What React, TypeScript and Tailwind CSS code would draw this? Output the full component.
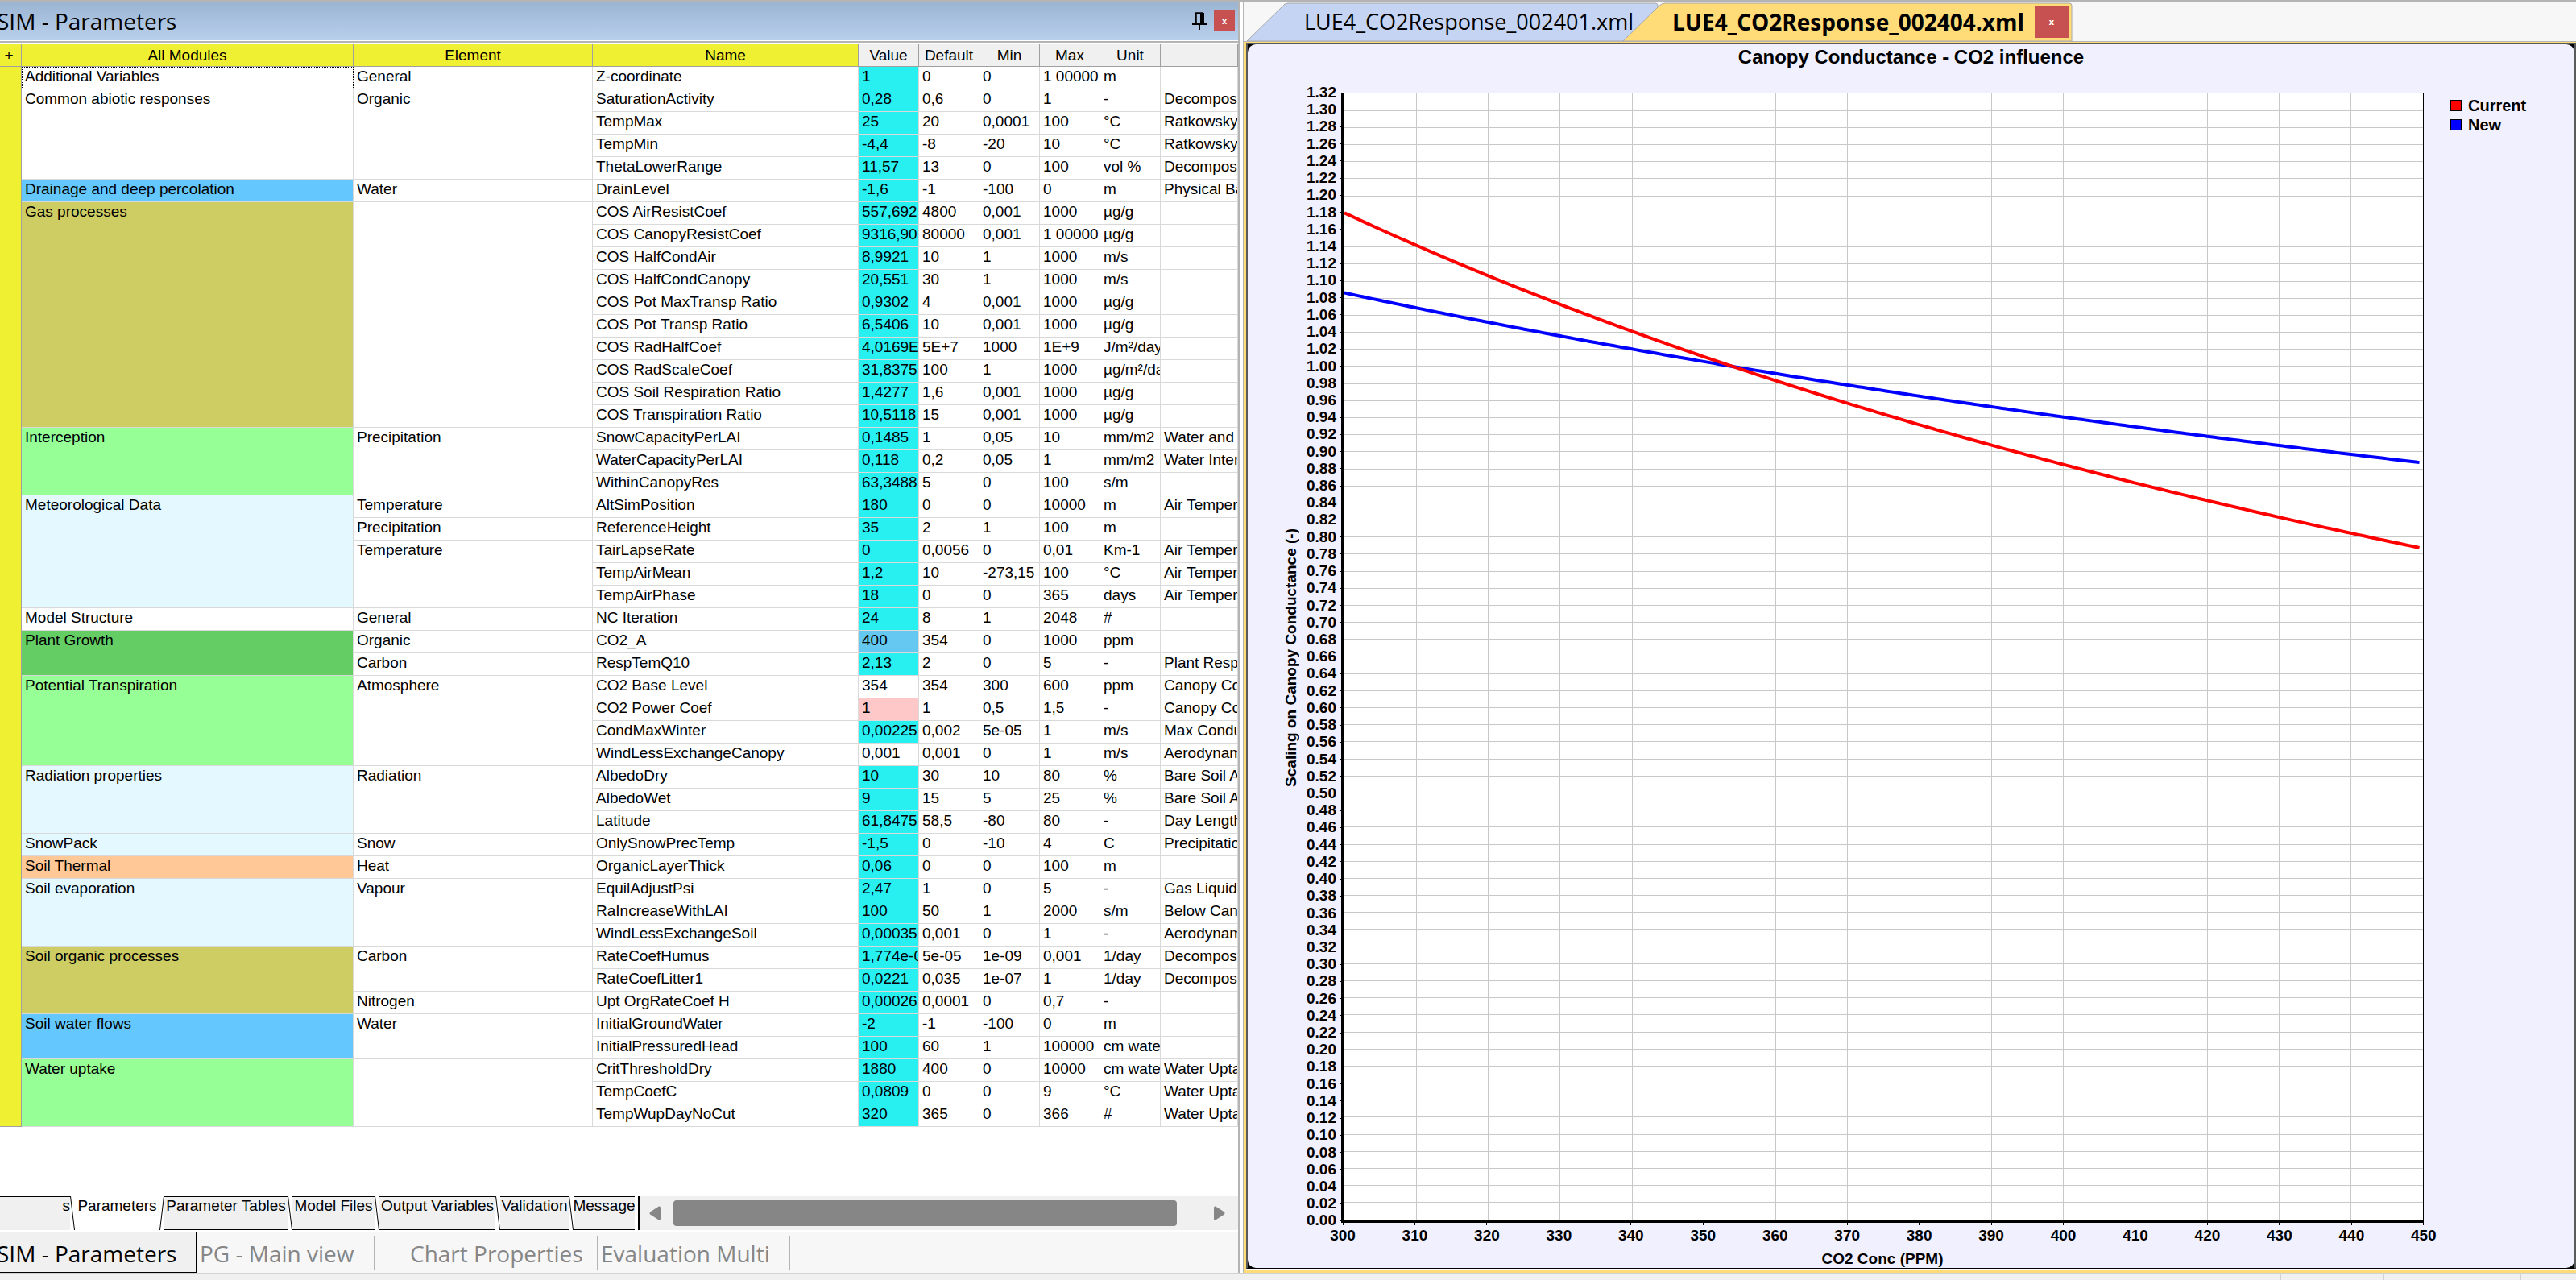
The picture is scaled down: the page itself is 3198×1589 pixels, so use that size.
import { Fragment } from "react";
import clsx from "clsx";

type Param = [name: string, value: string, def: string, min: string, max: string, unit: string, group: string];

interface ModuleGroup {
  name: string;
  color: string;
  elements: { name: string; params: Param[] }[];
}

const modules: ModuleGroup[] = [
  { name: "Additional Variables", color: "bg-white", elements: [{ name: "General", params: [["Z-coordinate", "1", "0", "0", "1 00000", "m", ""]] }] },
  {
    name: "Common abiotic responses",
    color: "bg-white",
    elements: [
      {
        name: "Organic",
        params: [
          ["SaturationActivity", "0,28", "0,6", "0", "1", "-", "Decompos"],
          ["TempMax", "25", "20", "0,0001", "100", "°C", "Ratkowsky"],
          ["TempMin", "-4,4", "-8", "-20", "10", "°C", "Ratkowsky"],
          ["ThetaLowerRange", "11,57", "13", "0", "100", "vol %", "Decompos"],
        ],
      },
    ],
  },
  { name: "Drainage and deep percolation", color: "bg-[#64c8ff]", elements: [{ name: "Water", params: [["DrainLevel", "-1,6", "-1", "-100", "0", "m", "Physical Ba"]] }] },
  {
    name: "Gas processes",
    color: "bg-[#cdcd64]",
    elements: [
      {
        name: "",
        params: [
          ["COS AirResistCoef", "557,692", "4800", "0,001", "1000", "µg/g", ""],
          ["COS CanopyResistCoef", "9316,90", "80000", "0,001", "1 00000", "µg/g", ""],
          ["COS HalfCondAir", "8,9921", "10", "1", "1000", "m/s", ""],
          ["COS HalfCondCanopy", "20,551", "30", "1", "1000", "m/s", ""],
          ["COS Pot MaxTransp Ratio", "0,9302", "4", "0,001", "1000", "µg/g", ""],
          ["COS Pot Transp Ratio", "6,5406", "10", "0,001", "1000", "µg/g", ""],
          ["COS RadHalfCoef", "4,0169E", "5E+7", "1000", "1E+9", "J/m²/day", ""],
          ["COS RadScaleCoef", "31,8375", "100", "1", "1000", "µg/m²/da", ""],
          ["COS Soil Respiration Ratio", "1,4277", "1,6", "0,001", "1000", "µg/g", ""],
          ["COS Transpiration Ratio", "10,5118", "15", "0,001", "1000", "µg/g", ""],
        ],
      },
    ],
  },
  {
    name: "Interception",
    color: "bg-[#96ff96]",
    elements: [
      {
        name: "Precipitation",
        params: [
          ["SnowCapacityPerLAI", "0,1485", "1", "0,05", "10", "mm/m2", "Water and"],
          ["WaterCapacityPerLAI", "0,118", "0,2", "0,05", "1", "mm/m2", "Water Inter"],
          ["WithinCanopyRes", "63,3488", "5", "0", "100", "s/m", ""],
        ],
      },
    ],
  },
  {
    name: "Meteorological Data",
    color: "bg-[#e4f8ff]",
    elements: [
      { name: "Temperature", params: [["AltSimPosition", "180", "0", "0", "10000", "m", "Air Temper"]] },
      { name: "Precipitation", params: [["ReferenceHeight", "35", "2", "1", "100", "m", ""]] },
      {
        name: "Temperature",
        params: [
          ["TairLapseRate", "0", "0,0056", "0", "0,01", "Km-1", "Air Temper"],
          ["TempAirMean", "1,2", "10", "-273,15", "100", "°C", "Air Temper"],
          ["TempAirPhase", "18", "0", "0", "365", "days", "Air Temper"],
        ],
      },
    ],
  },
  { name: "Model Structure", color: "bg-white", elements: [{ name: "General", params: [["NC Iteration", "24", "8", "1", "2048", "#", ""]] }] },
  {
    name: "Plant Growth",
    color: "bg-[#64cd64]",
    elements: [
      { name: "Organic", params: [["CO2_A", "400", "354", "0", "1000", "ppm", ""]] },
      { name: "Carbon", params: [["RespTemQ10", "2,13", "2", "0", "5", "-", "Plant Resp"]] },
    ],
  },
  {
    name: "Potential Transpiration",
    color: "bg-[#96ff96]",
    elements: [
      {
        name: "Atmosphere",
        params: [
          ["CO2 Base Level", "354", "354", "300", "600", "ppm", "Canopy Co"],
          ["CO2 Power Coef", "1", "1", "0,5", "1,5", "-", "Canopy Co"],
          ["CondMaxWinter", "0,00225", "0,002", "5e-05", "1", "m/s", "Max Condu"],
          ["WindLessExchangeCanopy", "0,001", "0,001", "0", "1", "m/s", "Aerodynam"],
        ],
      },
    ],
  },
  {
    name: "Radiation properties",
    color: "bg-[#e4f8ff]",
    elements: [
      {
        name: "Radiation",
        params: [
          ["AlbedoDry", "10", "30", "10", "80", "%", "Bare Soil A"],
          ["AlbedoWet", "9", "15", "5", "25", "%", "Bare Soil A"],
          ["Latitude", "61,8475", "58,5", "-80", "80", "-", "Day Length"],
        ],
      },
    ],
  },
  { name: "SnowPack", color: "bg-[#e4f8ff]", elements: [{ name: "Snow", params: [["OnlySnowPrecTemp", "-1,5", "0", "-10", "4", "C", "Precipitatio"]] }] },
  { name: "Soil Thermal", color: "bg-[#ffc896]", elements: [{ name: "Heat", params: [["OrganicLayerThick", "0,06", "0", "0", "100", "m", ""]] }] },
  {
    name: "Soil evaporation",
    color: "bg-[#e4f8ff]",
    elements: [
      {
        name: "Vapour",
        params: [
          ["EquilAdjustPsi", "2,47", "1", "0", "5", "-", "Gas Liquid"],
          ["RaIncreaseWithLAI", "100", "50", "1", "2000", "s/m", "Below Can"],
          ["WindLessExchangeSoil", "0,00035", "0,001", "0", "1", "-", "Aerodynam"],
        ],
      },
    ],
  },
  {
    name: "Soil organic processes",
    color: "bg-[#cdcd64]",
    elements: [
      {
        name: "Carbon",
        params: [
          ["RateCoefHumus", "1,774e-0", "5e-05", "1e-09", "0,001", "1/day", "Decompos"],
          ["RateCoefLitter1", "0,0221", "0,035", "1e-07", "1", "1/day", "Decompos"],
        ],
      },
      { name: "Nitrogen", params: [["Upt OrgRateCoef H", "0,00026", "0,0001", "0", "0,7", "-", ""]] },
    ],
  },
  {
    name: "Soil water flows",
    color: "bg-[#64c8ff]",
    elements: [
      {
        name: "Water",
        params: [
          ["InitialGroundWater", "-2", "-1", "-100", "0", "m", ""],
          ["InitialPressuredHead", "100", "60", "1", "100000", "cm wate", ""],
        ],
      },
    ],
  },
  {
    name: "Water uptake",
    color: "bg-[#96ff96]",
    elements: [
      {
        name: "",
        params: [
          ["CritThresholdDry", "1880", "400", "0", "10000", "cm wate", "Water Upta"],
          ["TempCoefC", "0,0809", "0", "0", "9", "°C", "Water Upta"],
          ["TempWupDayNoCut", "320", "365", "0", "366", "#", "Water Upta"],
        ],
      },
    ],
  },
];

// Parameters whose value cell is not the usual "changed" cyan
const valueColors: Record<string, string> = {
  CO2_A: "bg-[#64c8f0]",
  "CO2 Base Level": "bg-white",
  "CO2 Power Coef": "bg-[#ffc8c8]",
  WindLessExchangeCanopy: "bg-white",
};

const cell = "h-7 overflow-hidden whitespace-nowrap border-b border-r border-[#d9d9d9] p-0 pb-[3px] pl-1 align-top font-normal";
const headCell = "h-7 overflow-hidden whitespace-nowrap border-b border-r border-[#a0a0a0] p-0 font-normal";

function ParameterTable() {
  const total = modules.flatMap((m) => m.elements.flatMap((e) => e.params)).length;

  return (
    <table className="w-full table-fixed border-separate border-spacing-0 text-left text-[19px] leading-6">
      <colgroup>
        <col className="w-[27px]" />
        <col className="w-[412px]" />
        <col className="w-[297px]" />
        <col className="w-[330px]" />
        <col className="w-[75px]" />
        <col className="w-[75px]" />
        <col className="w-[75px]" />
        <col className="w-[75px]" />
        <col className="w-[75px]" />
        <col />
      </colgroup>
      <thead className="text-center">
        <tr>
          <th className={clsx(headCell, "bg-[#f0f032] pr-1")}>+</th>
          {["All Modules", "Element", "Name"].map((label) => (
            <th key={label} className={clsx(headCell, "bg-[#f0f032]")}>
              {label}
            </th>
          ))}
          {["Value", "Default", "Min", "Max", "Unit", ""].map((label) => (
            <th key={label} className={clsx(headCell, "bg-[#f0f0f0]")}>
              {label}
            </th>
          ))}
        </tr>
      </thead>
      <tbody>
        {modules.map((mod, m) => {
          const rows = mod.elements.reduce((sum, e) => sum + e.params.length, 0);
          return (
            <Fragment key={mod.name}>
              {mod.elements.map((element, e) =>
                element.params.map(([name, value, def, min, max, unit, group], p) => (
                  <tr key={name}>
                    {m === 0 && <td rowSpan={total} className="border-b border-r border-[#a0a0a0] bg-[#f0f032] p-0" />}
                    {e === 0 && p === 0 && (
                      <th rowSpan={rows} className={clsx(cell, mod.color, m === 0 && "outline-1 -outline-offset-1 outline-dotted outline-black")}>
                        {mod.name}
                      </th>
                    )}
                    {p === 0 && (
                      <td rowSpan={element.params.length} className={cell}>
                        {element.name}
                      </td>
                    )}
                    <td className={cell}>{name}</td>
                    <td className={clsx(cell, valueColors[name] ?? "bg-[#28f0f0]")}>{value}</td>
                    <td className={cell}>{def}</td>
                    <td className={cell}>{min}</td>
                    <td className={cell}>{max}</td>
                    <td className={cell}>{unit}</td>
                    <td className={cell}>{group}</td>
                  </tr>
                ))
              )}
            </Fragment>
          );
        })}
      </tbody>
    </table>
  );
}

const sheets = [
  { label: "Parameters", width: "w-[105px]" },
  { label: "Parameter Tables", width: "w-[153px]" },
  { label: "Model Files", width: "w-[102px]" },
  { label: "Output Variables", width: "w-[144px]" },
  { label: "Validation", width: "w-[85px]" },
  { label: "Message", width: "w-[76px]" },
];

function SheetTabs() {
  return (
    <div className="flex h-11 text-[19px] leading-[22px]">
      <div className="flex h-[42px] w-[788px] overflow-hidden">
        <button className="flex w-[87px] shrink-0 items-start justify-end border-t border-black bg-[#f0f0f0]">s</button>
        {sheets.map(({ label, width }, i) => (
          <Fragment key={label}>
            <svg className="h-full w-[6px] shrink-0" viewBox="0 0 6 42" preserveAspectRatio="none" fill="none" stroke="#000">
              <path d={i === 1 ? "M5.500 0 L0.500 42" : "M0.500 0 L5.500 42"} />
            </svg>
            <button
              className={clsx(
                "flex shrink-0 items-start justify-center whitespace-nowrap border-black",
                width,
                i === 0 ? "bg-white pt-px" : "border-y bg-[#f0f0f0]"
              )}
            >
              {label}
            </button>
          </Fragment>
        ))}
      </div>
      <div className="ml-1 flex h-[42px] grow items-center border-l-2 border-black bg-[#f0f0f0] pl-3 pr-4">
        <button aria-label="Scroll left">
          <svg className="h-[18px] w-[14px]" viewBox="0 0 14 18" fill="#868686">
            <path d="M12 0.5 Q14 0 14 2 V16 Q14 18 12 17.5 L1 10.500 Q0 9 1 7.500 Z" />
          </svg>
        </button>
        <div className="ml-4 mr-[46px] h-8 grow rounded-sm bg-[#868686]" />
        <button aria-label="Scroll right">
          <svg className="h-[18px] w-[14px]" viewBox="0 0 14 18" fill="#868686">
            <path d="M2 0.5 Q0 0 0 2 V16 Q0 18 2 17.500 L13 10.500 Q14 9 13 7.500 Z" />
          </svg>
        </button>
      </div>
    </div>
  );
}

function ParametersPane() {
  return (
    <section className="flex w-[1539px] shrink-0 flex-col overflow-hidden border-r-2 border-[#b4b4b4] bg-white">
      <header className="flex h-12 items-center bg-linear-to-b from-[#9ab4d2] to-[#b9d0ec] pr-1">
        <h1 className="-ml-1 font-['Open_Sans',sans-serif] text-[28px] leading-8">SIM - Parameters</h1>
        <button aria-label="Pin" className="ml-auto mr-2">
          <svg className="h-[22px] w-5" viewBox="0 0 20 22" fill="none" stroke="#000">
            <path d="M5.500 14 V1.500 H14" strokeWidth="2.500" />
            <path d="M13.500 1 V14" strokeWidth="5" />
            <path d="M1 14.500 H19" strokeWidth="3" />
            <path d="M10 15 V22" strokeWidth="2" />
          </svg>
        </button>
        <button aria-label="Close" className="flex h-[26px] w-[26px] items-center justify-center bg-[#c75050] text-[11px] font-bold leading-3 text-white">
          x
        </button>
      </header>
      <div className="mt-px flex grow flex-col border-t-2 border-[#b4b4b4] pt-0.5">
        <ParameterTable />
        <div className="mt-auto">
          <SheetTabs />
        </div>
      </div>
      <nav className="flex h-[51px] border-t border-black bg-[#f7f7f7] font-['Open_Sans',sans-serif] text-[28px] leading-[52px] text-[#868686]">
        <button className="w-[244px] shrink-0 border-b border-r border-black bg-[#f0f0f0] text-left text-black">
          <span className="-ml-1">SIM - Parameters</span>
        </button>
        <button className="my-1 w-[221px] shrink-0 border-r border-[#b4b4b4] pl-1 text-left leading-[44px]">PG - Main view</button>
        <button className="my-1 w-[277px] shrink-0 border-r border-[#b4b4b4] pl-11 text-left leading-[44px]">Chart Properties</button>
        <button className="my-1 w-[239px] shrink-0 border-r border-[#b4b4b4] pl-1 text-left leading-[44px]">Evaluation Multi</button>
      </nav>
    </section>
  );
}

const X_MIN = 300;
const X_MAX = 450;
const Y_MAX = 1.32;
const BASE_LEVEL = 354;

const xTicks = Array.from({ length: 16 }, (_, i) => X_MIN + i * 10);
const yTicks = Array.from({ length: 67 }, (_, i) => (132 - i * 2) / 100);

const series = [
  { label: "Current", stroke: "#ff0000", swatch: "bg-[#ff0000]", power: 1 },
  { label: "New", stroke: "#0000ff", swatch: "bg-[#0000ff]", power: 0.5 },
];

function curve(power: number) {
  const points: string[] = [];
  for (let co2 = X_MIN; co2 < X_MAX; co2 += 0.5) {
    const scale = Math.pow(BASE_LEVEL / co2, power);
    points.push(`${(((co2 - X_MIN) / (X_MAX - X_MIN)) * 1000).toFixed(2)},${((1 - scale / Y_MAX) * 1000).toFixed(2)}`);
  }
  return points.join(" ");
}

function Plot() {
  return (
    <div className="relative border-b-4 border-l-4 border-r border-t border-black bg-white">
      <svg className="absolute inset-0 h-full w-full" shapeRendering="crispEdges" stroke="#c8c8c8">
        {xTicks.slice(1, -1).map((t) => {
          const x = `${((t - X_MIN) / (X_MAX - X_MIN)) * 100}%`;
          return <line key={t} x1={x} x2={x} y1="0" y2="100%" />;
        })}
        {yTicks.slice(1, -1).map((t) => {
          const y = `${(1 - t / Y_MAX) * 100}%`;
          return <line key={t} x1="0" x2="100%" y1={y} y2={y} />;
        })}
      </svg>
      <svg className="absolute inset-0 h-full w-full" viewBox="0 0 1000 1000" preserveAspectRatio="none" fill="none" strokeWidth="4">
        {[...series].reverse().map((s) => (
          <polyline key={s.label} points={curve(s.power)} stroke={s.stroke} vectorEffect="non-scaling-stroke" />
        ))}
      </svg>
    </div>
  );
}

function Chart() {
  return (
    <div className="bg-black">
      <figure className="flex h-full flex-col rounded-[10px] bg-[#f0f0ff] font-bold">
        <figcaption className="mx-4 pt-0.5 text-center text-[24px] leading-7">Canopy Conductance - CO2 influence</figcaption>
        <div className="mt-[30px] flex grow">
          <div className="grid grow grid-cols-[66px_50px_1fr] grid-rows-[1fr_56px] text-[19px] leading-5">
            <div className="flex items-center justify-end pr-0.5">
              <span className="rotate-180 whitespace-nowrap [writing-mode:vertical-rl]">Scaling on Canopy Conductance (-)</span>
            </div>
            <div className="flex flex-col justify-between pb-0.5">
              {yTicks.map((t) => (
                <div key={t} className="flex h-0 items-center justify-end gap-1">
                  {t.toFixed(2)}
                  <span className="h-px w-[2px] bg-black" />
                </div>
              ))}
            </div>
            <Plot />
            <div className="col-start-3 flex flex-col">
              <div className="flex justify-between pl-0.5">
                {xTicks.map((t) => (
                  <div key={t} className="flex w-0 flex-col items-center gap-[3px]">
                    <span className="h-[3px] w-px bg-black" />
                    {t}
                  </div>
                ))}
              </div>
              <div className="mt-[9px] text-center">CO2 Conc (PPM)</div>
            </div>
          </div>
          <ul className="w-[187px] pl-[33px] pt-1 text-[20px] leading-6">
            {series.map((s) => (
              <li key={s.label} className="flex items-center gap-2">
                <span className={clsx("size-3.5 border border-black", s.swatch)} />
                {s.label}
              </li>
            ))}
          </ul>
        </div>
      </figure>
    </div>
  );
}

function ChartPane() {
  return (
    <section className="ml-1 flex min-w-0 grow flex-col border-l border-[#b4b4b4] bg-[#f7f7f7]">
      <div className="relative flex h-[49px] items-stretch pt-px font-['Open_Sans',sans-serif] text-[27px] leading-[48px]">
        <svg className="absolute inset-0 h-full w-[1030px]" viewBox="0 0 1030 49" stroke="#a8a8a8">
          <path d="M4 49 L48 6 Q51 2 55 2 H511 Q514 2 514 5 V49 Z" fill="#c6d4f4" />
          <path d="M471 49 L515 6 Q519 2 523 2 H1025 Q1028 2 1028 5 V49 Z" fill="#ffdc78" />
        </svg>
        <button className="relative ml-[75px] w-[412px] whitespace-nowrap text-left">LUE4_CO2Response_002401.xml</button>
        <button className="relative ml-[45px] w-[450px] whitespace-nowrap text-left text-[28px] font-bold">LUE4_CO2Response_002404.xml</button>
        <button aria-label="Close tab" className="relative my-1 flex w-[42px] items-center justify-center bg-[#c75050] text-[11px] font-bold text-white">
          x
        </button>
      </div>
      <div className="flex grow flex-col border-t border-[#b4b4b4] bg-[#ffdc78] pb-[3px] pl-[3px] pt-px">
        <div className="flex grow flex-col bg-white pb-0.5">
          <div className="grid grow border-2 border-b border-[#5a5a5a] border-b-black">
            <Chart />
          </div>
        </div>
      </div>
    </section>
  );
}

export default function App() {
  return (
    <main className="flex min-h-screen flex-col bg-[#f0f0f0] font-['Liberation_Sans',Arial,sans-serif] text-black">
      <div className="flex grow border-t-2 border-[#b4b4b4] bg-white">
        <ParametersPane />
        <ChartPane />
      </div>
      <footer className="flex h-[9px] justify-end border-t border-[#d2d2d2] pt-px">
        <span className="w-32 border-l border-[#d2d2d2]" />
        <span className="w-[170px] border-l border-[#d2d2d2]" />
        <span className="w-[69px] border-l border-[#d2d2d2]" />
      </footer>
    </main>
  );
}
